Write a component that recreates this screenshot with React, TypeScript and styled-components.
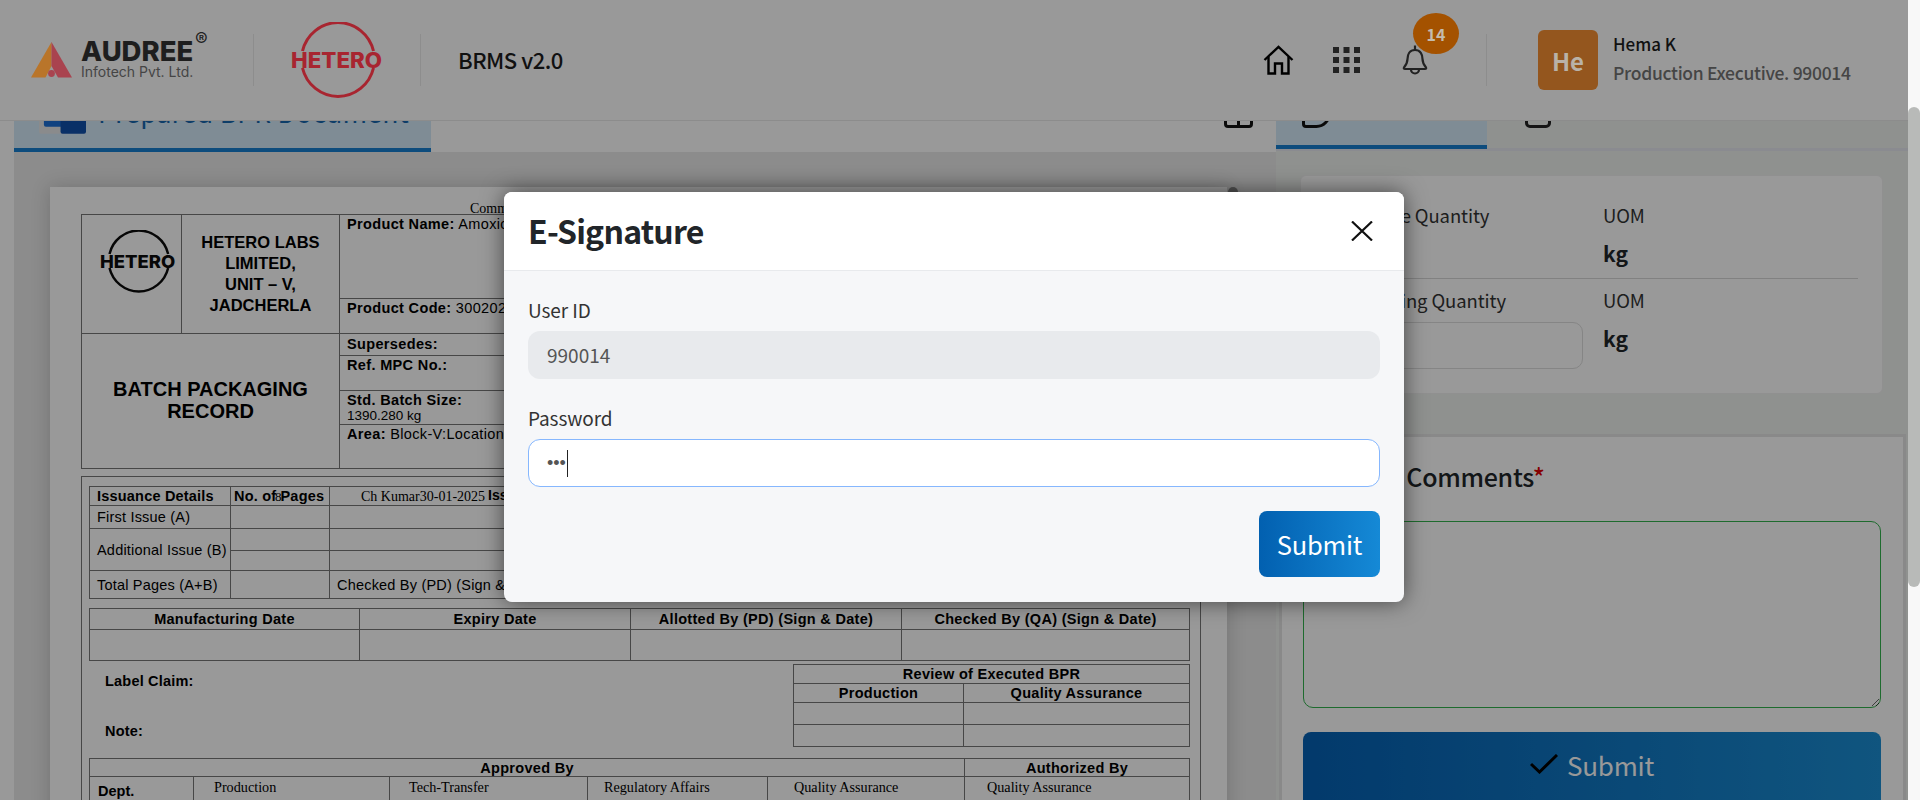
import React from "react";
import styled, { createGlobalStyle } from "styled-components";

const UI_FONT = '"Noto Sans CJK JP", "Noto Sans", sans-serif';
const DOC_SANS = '"Liberation Sans", Arial, sans-serif';
const DOC_SERIF = '"Liberation Serif", "Times New Roman", serif';

const GlobalStyle = createGlobalStyle`
  html, body {
    margin: 0;
    padding: 0;
    height: 800px;
    overflow: hidden;
    background: #fff;
    font-family: ${UI_FONT};
  }
  * { box-sizing: border-box; }
`;

const AudreeMark = () => (
  <MarkSvg viewBox="0 0 41 36">
    <path d="M20.5 0 L0 35.5 H14.5 L20.5 24 Z" fill="#b9752a" />
    <path d="M20.5 0 L41 35.5 H27 L20.5 24 Z" fill="#a9434f" />
    <circle cx="20.5" cy="31.5" r="3.4" fill="#a9434f" />
  </MarkSvg>
);

const HeteroLogo = ({ color, width }: { color: string; width: number }) => (
  <LogoSvg viewBox="0 0 92 76" $w={width}>
    <path d="M11.5 29 A36.5 37 0 0 1 82.5 29" fill="none" stroke={color} strokeWidth="3" />
    <path d="M11.5 46 A36.5 37 0 0 0 82.5 46" fill="none" stroke={color} strokeWidth="3" />
    <text x="0" y="45.5" textLength="91" lengthAdjust="spacingAndGlyphs" fill={color} fontFamily="Inter, sans-serif" fontWeight="800" fontSize="21">
      HETERO
    </text>
  </LogoSvg>
);

const HomeIcon = () => (
  <IconSvg viewBox="0 0 31 30" width="31" height="30" fill="none" stroke="#000" strokeWidth="2.4">
    <path d="M1.5 15 L15.5 1.8 L29.5 15" />
    <path d="M5.5 11.5 V28.5 H12 V18.5 H19 V28.5 H25.5 V11.5" />
  </IconSvg>
);

const GridIcon = () => (
  <IconSvg viewBox="0 0 27 26" width="27" height="26" fill="#222">
    {[0, 10, 20].map(y =>
      [0, 10.5, 21].map(x => <rect key={`${x}-${y}`} x={x} y={y} width="6" height="6" />)
    )}
  </IconSvg>
);

const BellIcon = () => (
  <IconSvg viewBox="0 0 26 30" width="26" height="30" fill="none" stroke="#222" strokeWidth="2.2">
    <path d="M13 0.5 V5" />
    <path d="M13 5 C7.5 5 5.5 9.5 5.5 14 C5.5 18 4 20 2 22.5 C1.5 23.5 2 24 3 24 H23 C24 24 24.5 23.5 24 22.5 C22 20 20.5 18 20.5 14 C20.5 9.5 18.5 5 13 5 Z" />
    <path d="M9 24.5 a4 4 0 0 0 8 0" />
  </IconSvg>
);

const DocTabIcon = () => (
  <DocIconSvg viewBox="0 0 48 36">
    <rect x="0" y="8" width="30" height="27" rx="2" fill="#e6e8ea" />
    <rect x="5" y="0" width="28" height="28" rx="2" fill="#1c6fd6" />
    <rect x="22" y="6" width="26" height="29" rx="2" fill="#0f50ac" />
  </DocIconSvg>
);

const CloseIcon = () => (
  <IconSvg viewBox="0 0 22 20" width="22" height="20" fill="none" stroke="#111" strokeWidth="2.2">
    <path d="M1 0.5 L21 19.5 M21 0.5 L1 19.5" />
  </IconSvg>
);

const CheckIcon = () => (
  <IconSvg viewBox="0 0 28 20" width="28" height="20" fill="none" stroke="#000" strokeWidth="3">
    <path d="M1 10 L9.5 18 L27 1" />
  </IconSvg>
);

const App = () => (
  <Shell>
    <GlobalStyle />
    <Viewport>
      <Content>
        <LeftPanel>
          <TabBar>
            <DocTab>
              <DocTabIcon />
              <DocTabTitle>Prepared BPR Document</DocTabTitle>
            </DocTab>
            <ExpandGlyph />
          </TabBar>
          <DocScroller>
            <DocPage>
              <DocNote>Comments</DocNote>
              <DocTable>
                <colgroup>
                  <DocCol $w={100} />
                  <DocCol $w={158} />
                  <col />
                </colgroup>
                <tbody>
                  <DocRow $h={84}>
                    <LogoCell rowSpan={2}>
                      <HeteroLogo color="#0c0c0c" width={76} />
                    </LogoCell>
                    <CompanyCell rowSpan={2}>
                      HETERO LABS LIMITED,
                      <br />
                      UNIT – V,
                      <br />
                      JADCHERLA
                    </CompanyCell>
                    <InfoCell $top>
                      <b>Product Name:</b> Amoxicillin Trihydrate
                    </InfoCell>
                  </DocRow>
                  <DocRow $h={35}>
                    <InfoCell $top>
                      <b>Product Code:</b> 300202
                    </InfoCell>
                  </DocRow>
                  <DocRow $h={22}>
                    <RecordCell colSpan={2} rowSpan={4}>
                      BATCH PACKAGING
                      <br />
                      RECORD
                    </RecordCell>
                    <InfoCell>
                      <b>Supersedes:</b>
                    </InfoCell>
                  </DocRow>
                  <DocRow $h={35}>
                    <InfoCell $top>
                      <b>Ref. MPC No.:</b>
                    </InfoCell>
                  </DocRow>
                  <DocRow $h={34}>
                    <InfoCell $top>
                      <b>Std. Batch Size:</b>
                      <SmallValue>1390.280 kg</SmallValue>
                    </InfoCell>
                  </DocRow>
                  <DocRow $h={44}>
                    <InfoCell $top>
                      <b>Area:</b> Block-V:Location
                    </InfoCell>
                  </DocRow>
                </tbody>
              </DocTable>

              <DocBox>
                <DocTable>
                  <colgroup>
                    <DocCol $w={141} />
                    <DocCol $w={99} />
                    <col />
                  </colgroup>
                  <tbody>
                    <DocRow $h={18}>
                      <HeadCell>Issuance Details</HeadCell>
                      <PagesCell>
                        No. of Pages
                        <StampMark>8</StampMark>
                      </PagesCell>
                      <StampCell>
                        <StampName>Ch Kumar30-01-2025</StampName>
                        <StampIssue>Issued By</StampIssue>
                      </StampCell>
                    </DocRow>
                    <DocRow $h={23}>
                      <TextCell>First Issue (A)</TextCell>
                      <TextCell />
                      <TextCell />
                    </DocRow>
                    <DocRow $h={22}>
                      <TextCell rowSpan={2}>Additional Issue (B)</TextCell>
                      <TextCell />
                      <TextCell />
                    </DocRow>
                    <DocRow $h={20}>
                      <TextCell />
                      <TextCell />
                    </DocRow>
                    <DocRow $h={28}>
                      <TextCell>Total Pages (A+B)</TextCell>
                      <TextCell />
                      <TextCell>Checked By (PD) (Sign &amp; Date)</TextCell>
                    </DocRow>
                  </tbody>
                </DocTable>

                <DatesTable>
                  <colgroup>
                    <DocCol $w={270} />
                    <DocCol $w={271} />
                    <DocCol $w={271} />
                    <col />
                  </colgroup>
                  <tbody>
                    <DocRow $h={21}>
                      <CenterHead>Manufacturing Date</CenterHead>
                      <CenterHead>Expiry Date</CenterHead>
                      <CenterHead>Allotted By (PD) (Sign &amp; Date)</CenterHead>
                      <CenterHead>Checked By (QA) (Sign &amp; Date)</CenterHead>
                    </DocRow>
                    <DocRow $h={31}>
                      <TextCell />
                      <TextCell />
                      <TextCell />
                      <TextCell />
                    </DocRow>
                  </tbody>
                </DatesTable>

                <ClaimRow>
                  <ClaimNotes>
                    <ClaimLabel>Label Claim:</ClaimLabel>
                    <ClaimLabel>Note:</ClaimLabel>
                  </ClaimNotes>
                  <ReviewTable>
                    <colgroup>
                      <DocCol $w={170} />
                      <col />
                    </colgroup>
                    <tbody>
                      <DocRow $h={19}>
                        <CenterHead colSpan={2}>Review of Executed BPR</CenterHead>
                      </DocRow>
                      <DocRow $h={19}>
                        <CenterHead>Production</CenterHead>
                        <CenterHead>Quality Assurance</CenterHead>
                      </DocRow>
                      <DocRow $h={22}>
                        <TextCell />
                        <TextCell />
                      </DocRow>
                      <DocRow $h={22}>
                        <TextCell />
                        <TextCell />
                      </DocRow>
                    </tbody>
                  </ReviewTable>
                </ClaimRow>

                <ApprovalTable>
                  <colgroup>
                    <DocCol $w={104} />
                    <DocCol $w={196} />
                    <DocCol $w={198} />
                    <DocCol $w={180} />
                    <DocCol $w={197} />
                    <col />
                  </colgroup>
                  <tbody>
                    <DocRow $h={18}>
                      <CenterHead colSpan={5}>Approved By</CenterHead>
                      <CenterHead>Authorized By</CenterHead>
                    </DocRow>
                    <DocRow $h={40}>
                      <DeptCell>Dept.</DeptCell>
                      <DeptName $pad={20}>Production</DeptName>
                      <DeptName $pad={19}>Tech-Transfer</DeptName>
                      <DeptName $pad={16}>Regulatory Affairs</DeptName>
                      <DeptName $pad={26}>Quality Assurance</DeptName>
                      <DeptName $pad={22}>Quality Assurance</DeptName>
                    </DocRow>
                  </tbody>
                </ApprovalTable>
              </DocBox>
            </DocPage>
            <PageKnob />
          </DocScroller>
        </LeftPanel>

        <RightPanel>
          <SideTabs>
            <SideTab $active>
              <ChatGlyph />
            </SideTab>
            <SideTab>
              <FormGlyph />
            </SideTab>
          </SideTabs>

          <QtyCard>
            <QtyRow $divider>
              <QtyLabel>Package Quantity</QtyLabel>
              <QtyLabel>UOM</QtyLabel>
              <span />
              <QtyValue>kg</QtyValue>
            </QtyRow>
            <QtyRow>
              <QtyLabel>Packaging Quantity</QtyLabel>
              <QtyLabel>UOM</QtyLabel>
              <QtyInput />
              <QtyValue>kg</QtyValue>
            </QtyRow>
          </QtyCard>

          <CommentBox>
            <CommentTitle>
              Enter Comments<Required>*</Required>
            </CommentTitle>
            <CommentArea />
            <WideSubmit>
              <CheckIcon />
              Submit
            </WideSubmit>
          </CommentBox>
        </RightPanel>
      </Content>

      <Backdrop>
        <Modal>
          <ModalHeader>
            <ModalTitle>E-Signature</ModalTitle>
            <CloseIcon />
          </ModalHeader>
          <ModalBody>
            <FieldLabel>User ID</FieldLabel>
            <ReadOnlyField>990014</ReadOnlyField>
            <FieldLabel $gap>Password</FieldLabel>
            <PasswordField>
              <Dots>•••</Dots>
              <Caret />
            </PasswordField>
            <ModalActions>
              <ModalSubmit>Submit</ModalSubmit>
            </ModalActions>
          </ModalBody>
        </Modal>
      </Backdrop>

      <Header>
        <Brand>
          <AudreeMark />
          <BrandText>
            <BrandName>
              AUDREE<BrandMark>®</BrandMark>
            </BrandName>
            <BrandSub>Infotech Pvt. Ltd.</BrandSub>
          </BrandText>
        </Brand>
        <HeaderDivider $left={32} />
        <HeteroSlot>
          <HeteroLogo color="#a82530" width={92} />
        </HeteroSlot>
        <HeaderDivider $left={37} />
        <AppName>BRMS v2.0</AppName>

        <HeaderRight>
          <HomeIcon />
          <GridSlot>
            <GridIcon />
          </GridSlot>
          <BellSlot>
            <BellIcon />
            <Badge>14</Badge>
          </BellSlot>
          <HeaderDivider $left={58} />
          <Avatar>He</Avatar>
          <UserText>
            <UserName>Hema K</UserName>
            <UserRole>Production Executive. 990014</UserRole>
          </UserText>
        </HeaderRight>
      </Header>
    </Viewport>
    <ScrollTrack>
      <ScrollThumb />
    </ScrollTrack>
  </Shell>
);

const Shell = styled.div`
  display: flex;
  width: 1920px;
  height: 800px;
  overflow: hidden;
`;

const Viewport = styled.div`
  position: relative;
  width: 1908px;
  height: 800px;
  overflow: hidden;
`;

const ScrollTrack = styled.div`
  width: 12px;
  height: 800px;
  padding-top: 107px;
  background: #f8f8f8;
`;

const ScrollThumb = styled.div`
  height: 480px;
  border-radius: 6px;
  background: #b8bab8;
`;

/* header sits above the backdrop in the reference, its colours are already the dimmed ones */
const Header = styled.header`
  position: absolute;
  top: 0;
  left: 0;
  right: 0;
  z-index: 4;
  height: 121px;
  display: flex;
  align-items: center;
  padding-left: 31px;
  background: #999;
  border-bottom: 1px solid #8c8c8c;
`;

const Brand = styled.div`
  display: flex;
  align-items: flex-end;
  width: 190px;
  height: 36px;
`;

const MarkSvg = styled.svg`
  width: 41px;
  height: 36px;
  flex: none;
`;

const BrandText = styled.div`
  margin-left: 9px;
  margin-bottom: -2px;
  font-family: Inter, sans-serif;
`;

const BrandName = styled.div`
  position: relative;
  padding-top: 1px;
  font-size: 27.5px;
  line-height: 25px;
  font-weight: 800;
  color: #1e1e1e;
`;

const BrandMark = styled.span`
  position: absolute;
  left: 114px;
  top: -8px;
  font-size: 19px;
  line-height: 20px;
  font-weight: 400;
  color: #222;
`;

const BrandSub = styled.div`
  font-size: 14px;
  line-height: 16px;
  color: #454545;
  white-space: nowrap;
`;

const HeaderDivider = styled.div<{ $left: number }>`
  flex: none;
  width: 1px;
  height: 52px;
  margin-left: ${p => p.$left}px;
  background: #8d8d8d;
`;

const HeteroSlot = styled.div`
  margin-left: 37px;
  width: 92px;
  height: 76px;
`;

const LogoSvg = styled.svg<{ $w: number }>`
  display: block;
  width: ${p => p.$w}px;
  height: ${p => (p.$w * 76) / 92}px;
`;

const AppName = styled.div`
  margin-left: 37px;
  margin-top: -2px;
  font-size: 22px;
  font-weight: 500;
  letter-spacing: -0.5px;
  color: #111;
  white-space: nowrap;
`;

const HeaderRight = styled.div`
  margin-left: auto;
  display: flex;
  align-items: center;
`;

const IconSvg = styled.svg`
  display: block;
  flex: none;
`;

const GridSlot = styled.div`
  margin-left: 39px;
`;

const BellSlot = styled.div`
  position: relative;
  margin-left: 42px;
  width: 26px;
`;

const Badge = styled.div`
  position: absolute;
  left: 11px;
  top: -32px;
  width: 46px;
  height: 41px;
  border-radius: 50%;
  display: flex;
  align-items: center;
  justify-content: center;
  background: #a45200;
  color: #c4bcae;
  font-size: 16px;
  font-weight: 700;
`;

const Avatar = styled.div`
  margin-left: 51px;
  width: 60px;
  height: 60px;
  border-radius: 6px;
  display: flex;
  align-items: center;
  justify-content: center;
  background: #94561e;
  color: #b9b2a8;
  font-size: 24px;
  font-weight: 700;
`;

const UserText = styled.div`
  margin-left: 15px;
  margin-top: -3px;
  width: 295px;
`;

const UserName = styled.div`
  font-size: 17px;
  line-height: 24px;
  font-weight: 500;
  color: #111;
`;

const UserRole = styled.div`
  margin-top: 5px;
  font-size: 17.5px;
  line-height: 24px;
  font-weight: 500;
  letter-spacing: -0.3px;
  color: #454545;
`;

const Content = styled.div`
  display: grid;
  grid-template-columns: 1276px 1fr;
  height: 800px;
`;

const LeftPanel = styled.div`
  padding-left: 14px;
  background: #fff;
  overflow: hidden;
`;

const TabBar = styled.div`
  display: flex;
  height: 152px;
  padding-top: 90px;
`;

const DocTab = styled.div`
  display: flex;
  align-items: center;
  width: 417px;
  padding-left: 25px;
  background: #d4e9f8;
  border-bottom: 4px solid #177fd0;
`;

const DocIconSvg = styled.svg`
  width: 47px;
  height: 36px;
  margin-top: -4px;
  flex: none;
`;

const DocTabTitle = styled.div`
  margin-left: 12px;
  margin-top: -15px;
  font-size: 26.5px;
  letter-spacing: 0.25px;
  color: #1766ad;
  white-space: nowrap;
`;

const ExpandGlyph = styled.div`
  margin-left: auto;
  margin-right: 23px;
  margin-top: 6px;
  width: 29px;
  height: 32px;
  border: 3px solid #111;
  border-radius: 4px;
  background: linear-gradient(#111, #111) center / 3px 100% no-repeat;
`;

const DocScroller = styled.div`
  position: relative;
  height: 648px;
  padding: 35px 49px 0 36px;
  background: #e9e9e9;
  overflow: hidden;
`;

const PageKnob = styled.div`
  position: absolute;
  right: 38px;
  top: 35px;
  width: 10px;
  height: 20px;
  border-radius: 5px;
  background: #888;
`;

const DocPage = styled.div`
  height: 640px;
  padding: 0 26px 0 31px;
  background: #fff;
  box-shadow: 0 0 18px rgba(0, 0, 0, 0.18);
  font-family: ${DOC_SANS};
  color: #000;
`;

const DocNote = styled.div`
  height: 27px;
  padding: 13px 0 0 389px;
  font-family: ${DOC_SERIF};
  font-size: 14px;
  line-height: 18px;
  white-space: nowrap;
`;

const DocTable = styled.table`
  width: 100%;
  table-layout: fixed;
  border-collapse: collapse;
  border: 1px solid #777;

  td {
    border: 1px solid #777;
    padding: 0;
  }
`;

const DocCol = styled.col<{ $w: number }>`
  width: ${p => p.$w}px;
`;

const DocRow = styled.tr<{ $h: number }>`
  height: ${p => p.$h}px;
`;

const LogoCell = styled.td`
  vertical-align: top;
  padding: 15px 0 0 18px !important;
`;

const CompanyCell = styled.td`
  text-align: center;
  vertical-align: top;
  padding: 17px 14px 0 !important;
  font-size: 16.5px;
  line-height: 21px;
  font-weight: 700;
`;

const InfoCell = styled.td<{ $top?: boolean }>`
  vertical-align: ${p => (p.$top ? "top" : "middle")};
  padding: ${p => (p.$top ? "1px" : "0")} 0 0 7px !important;
  font-size: 14.5px;
  line-height: 17px;
  letter-spacing: 0.35px;
  white-space: nowrap;
`;

const SmallValue = styled.div`
  font-size: 13.5px;
  line-height: 14px;
  letter-spacing: 0;
  white-space: nowrap;
`;

const RecordCell = styled.td`
  text-align: center;
  padding-bottom: 3px !important;
  font-size: 20px;
  line-height: 22px;
  font-weight: 700;
`;

const DocBox = styled.div`
  margin-top: 7px;
  height: 330px;
  padding: 9px 10px 0 7px;
  border: 1px solid #777;
  border-bottom: 0;
`;

const HeadCell = styled.td`
  padding-left: 7px !important;
  font-size: 14.5px;
  font-weight: 700;
  letter-spacing: 0.2px;
  white-space: nowrap;
`;

const PagesCell = styled.td`
  position: relative;
  padding-left: 3px !important;
  font-size: 14.5px;
  font-weight: 700;
  letter-spacing: 0.2px;
  white-space: nowrap;
`;

const StampMark = styled.span`
  position: absolute;
  left: 44px;
  top: 2px;
  font-family: ${DOC_SERIF};
  font-size: 13px;
  font-weight: 400;
`;

const StampCell = styled.td`
  position: relative;
  white-space: nowrap;
`;

const StampName = styled.span`
  margin-left: 31px;
  font-family: ${DOC_SERIF};
  font-size: 14px;
`;

const StampIssue = styled.span`
  position: absolute;
  left: 158px;
  top: 0;
  font-size: 14px;
  font-weight: 700;
`;

const TextCell = styled.td`
  padding-left: 7px !important;
  font-size: 14.5px;
  letter-spacing: 0.2px;
  white-space: nowrap;
`;

const DatesTable = styled(DocTable)`
  margin-top: 9px;
`;

const CenterHead = styled.td`
  text-align: center;
  font-size: 14.5px;
  line-height: 16px;
  font-weight: 700;
  letter-spacing: 0.3px;
  white-space: nowrap;
`;

const ClaimRow = styled.div`
  display: flex;
  align-items: flex-start;
  height: 82px;
  margin-top: 3px;
`;

const ClaimNotes = styled.div`
  flex: 1;
  padding: 8px 0 0 16px;
`;

const ClaimLabel = styled.div`
  height: 50px;
  font-size: 14.5px;
  line-height: 18px;
  font-weight: 700;
  letter-spacing: 0.2px;
`;

const ReviewTable = styled(DocTable)`
  width: 397px;
  flex: none;
`;

const ApprovalTable = styled(DocTable)`
  margin-top: 12px;
`;

const DeptCell = styled.td`
  padding: 6px 0 0 8px !important;
  vertical-align: top;
  font-size: 14.5px;
  line-height: 16px;
  font-weight: 700;
`;

const DeptName = styled.td<{ $pad: number }>`
  padding: 2px 0 0 ${p => p.$pad}px !important;
  vertical-align: top;
  font-family: ${DOC_SERIF};
  font-size: 14.2px;
  line-height: 17px;
  white-space: nowrap;
`;

const RightPanel = styled.div`
  padding-top: 90px;
  background: #eff2ef;
`;

const SideTabs = styled.div`
  display: flex;
  height: 61px;
  border-bottom: 3px solid #e6e8f0;
`;

const SideTab = styled.div<{ $active?: boolean }>`
  display: flex;
  justify-content: center;
  width: ${p => (p.$active ? 211 : 210)}px;
  height: 59px;
  padding-top: 8px;
  background: ${p => (p.$active ? "#d4e9f8" : "transparent")};
  border-bottom: 4px solid ${p => (p.$active ? "#177fd0" : "transparent")};
`;

const ChatGlyph = styled.div`
  width: 29px;
  height: 30px;
  margin-right: 130px;
  border: 3px solid #111;
  border-radius: 50% 50% 50% 4px;
`;

const FormGlyph = styled.div`
  width: 26px;
  height: 30px;
  margin-right: 108px;
  border: 3px solid #222;
  border-radius: 5px;
`;

const QtyCard = styled.div`
  margin: 24px 25px 0 24px;
  padding: 25px 24px 24px 39px;
  background: #fff;
  border: 1px solid #f0f0f0;
  border-radius: 6px;
`;

const QtyRow = styled.div<{ $divider?: boolean }>`
  display: grid;
  grid-template-columns: 243px 1fr;
  column-gap: 20px;
  row-gap: 8px;
  align-items: start;
  padding-bottom: ${p => (p.$divider ? 9 : 0)}px;
  margin-bottom: ${p => (p.$divider ? 7 : 0)}px;
  border-bottom: ${p => (p.$divider ? "1px solid #d8d8d8" : "0")};
`;

const QtyLabel = styled.div`
  font-size: 18.5px;
  line-height: 28px;
  letter-spacing: -0.1px;
  color: #333;
  white-space: nowrap;
`;

const QtyValue = styled.div`
  font-size: 21px;
  line-height: 32px;
  font-weight: 700;
  color: #212529;
`;

const QtyInput = styled.div`
  height: 47px;
  background: #fff;
  border: 1px solid #dedede;
  border-radius: 10px;
`;

const CommentBox = styled.div`
  margin: 40px 2px 0 3px;
  height: 400px;
  padding: 21px 22px 0 21px;
  background: #fff;
  border: 3px solid #e4e4e4;
  border-bottom: 0;
`;

const CommentTitle = styled.div`
  padding-left: 35px;
  font-size: 25px;
  line-height: 36px;
  font-weight: 500;
  letter-spacing: -0.3px;
  color: #212529;
  white-space: nowrap;
`;

const Required = styled.span`
  color: #e00000;
`;

const CommentArea = styled.textarea`
  display: block;
  width: 100%;
  height: 187px;
  margin-top: 27px;
  background: #fff;
  border: 1px solid #32b24d;
  border-radius: 10px;
  outline: none;
`;

const WideSubmit = styled.button`
  display: flex;
  align-items: center;
  justify-content: center;
  gap: 9px;
  width: 100%;
  height: 80px;
  margin-top: 24px;
  padding: 0 0 16px;
  border: 0;
  border-radius: 8px;
  background: linear-gradient(90deg, #0561b4, #1b8ed4);
  color: #fff;
  font-family: ${UI_FONT};
  font-size: 26px;
  letter-spacing: -0.2px;
`;

const Backdrop = styled.div`
  position: absolute;
  inset: 0;
  z-index: 3;
  display: flex;
  justify-content: center;
  padding-top: 192px;
  background: rgba(0, 0, 0, 0.4);
`;

const Modal = styled.div`
  width: 900px;
  height: 410px;
  border-radius: 8px;
  overflow: hidden;
  background: #f6f7f9;
  box-shadow: 0 0 22px rgba(0, 0, 0, 0.55);
`;

const ModalHeader = styled.div`
  display: flex;
  align-items: center;
  justify-content: space-between;
  height: 79px;
  padding: 0 31px 0 24px;
  background: #fff;
  border-bottom: 1px solid #e8eaed;
`;

const ModalTitle = styled.div`
  margin-top: -2px;
  font-size: 32px;
  font-weight: 700;
  letter-spacing: -0.8px;
  color: #212529;
`;

const ModalBody = styled.div`
  padding: 25px 24px 0 24px;
`;

const FieldLabel = styled.div<{ $gap?: boolean }>`
  margin-top: ${p => (p.$gap ? 25 : 0)}px;
  margin-bottom: 7px;
  font-size: 19px;
  line-height: 28px;
  letter-spacing: -0.1px;
  color: #333;
`;

const ReadOnlyField = styled.div`
  display: flex;
  align-items: center;
  height: 48px;
  padding: 0 0 2px 19px;
  border-radius: 12px;
  background: #e8eaed;
  font-size: 19px;
  color: #555;
`;

const PasswordField = styled.div`
  display: flex;
  align-items: center;
  height: 48px;
  padding-left: 18px;
  border: 1px solid #86b7fe;
  border-radius: 12px;
  background: #fff;
`;

const Dots = styled.span`
  font-family: ${DOC_SANS};
  font-size: 18px;
  color: #555;
`;

const Caret = styled.span`
  width: 1px;
  height: 27px;
  margin-left: 1px;
  background: #222;
`;

const ModalActions = styled.div`
  display: flex;
  justify-content: flex-end;
  margin-top: 24px;
`;

const ModalSubmit = styled.button`
  width: 121px;
  height: 66px;
  padding: 0 0 2px;
  border: 0;
  border-radius: 8px;
  background: linear-gradient(90deg, #0260b0, #1589d6);
  color: #fff;
  font-family: ${UI_FONT};
  font-size: 25.5px;
  letter-spacing: -0.2px;
`;

export default App;
